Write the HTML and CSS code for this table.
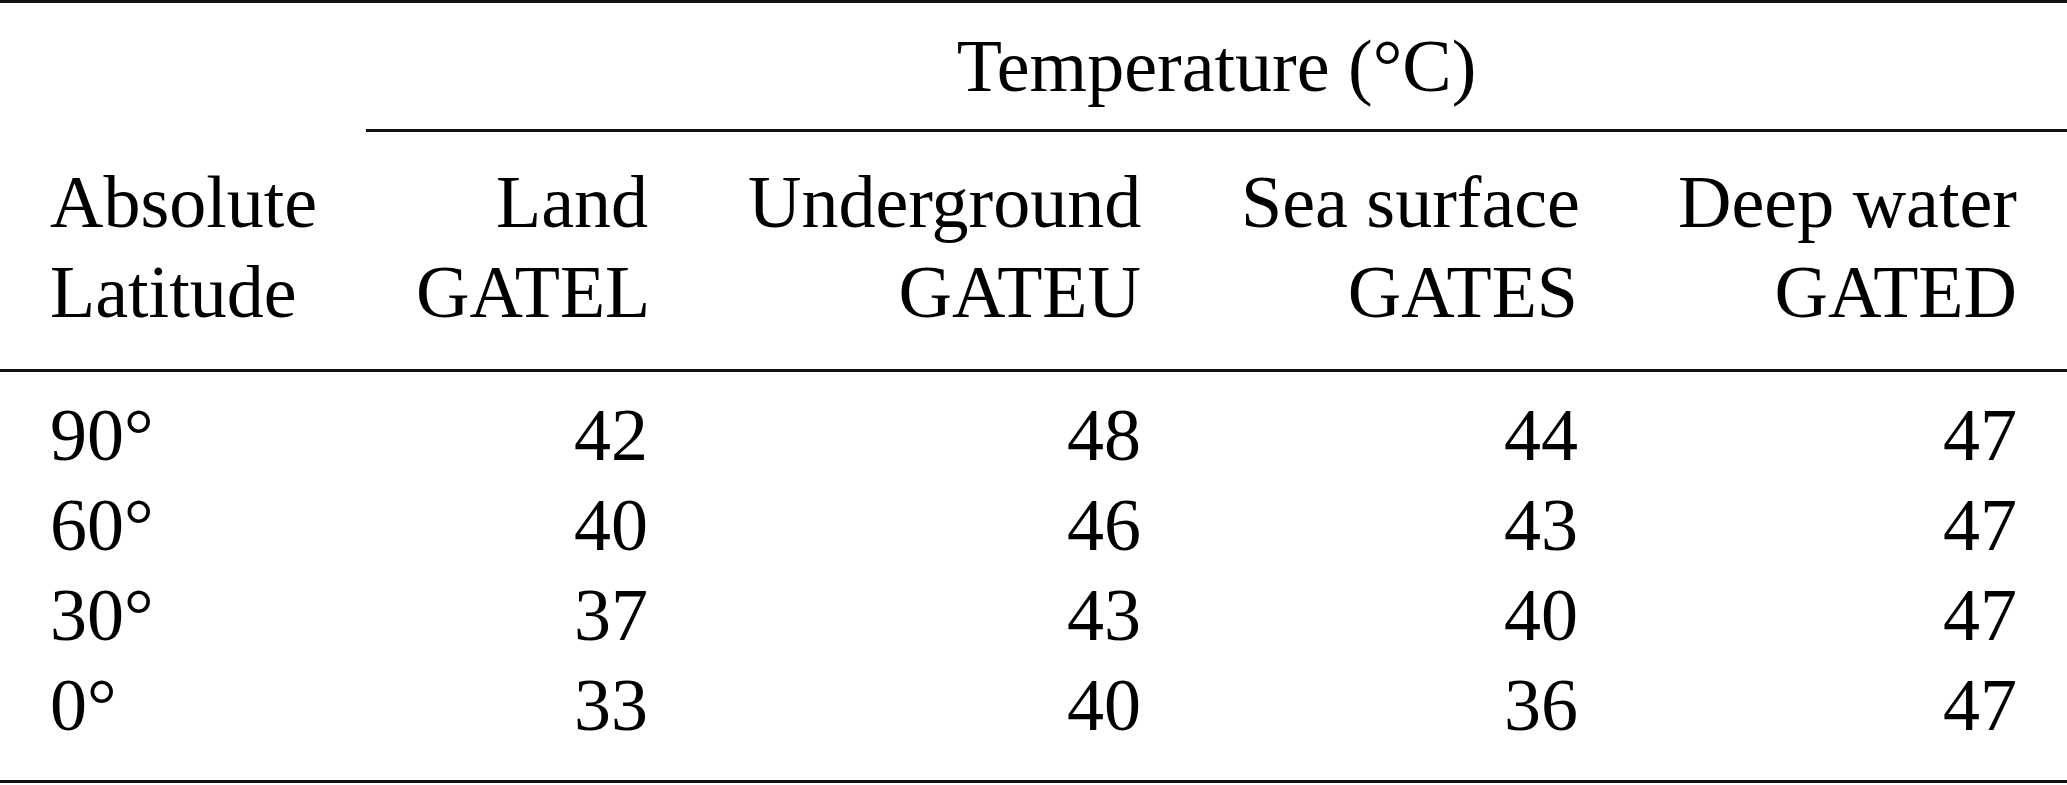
FILE: index.html
```html
<!DOCTYPE html>
<html>

<head>
  <title>Temperature table</title>
  <link rel="stylesheet" href="styles.css">
</head>

<body>
  <table class="data-table">
    <colgroup>
      <col class="col-lat">
      <col class="col-land">
      <col class="col-under">
      <col class="col-sea">
      <col class="col-deep">
    </colgroup>
    <thead>
      <tr class="group-row">
        <th class="blank"></th>
        <th class="group-title" colspan="4">Temperature (°C)</th>
      </tr>
      <tr class="head-row">
        <th class="left">Absolute<br>Latitude</th>
        <th>Land<br>GATEL</th>
        <th>Underground<br>GATEU</th>
        <th>Sea surface<br>GATES</th>
        <th>Deep water<br>GATED</th>
      </tr>
    </thead>
    <tbody>
      <tr class="first">
        <td class="left">90°</td>
        <td>42</td>
        <td>48</td>
        <td>44</td>
        <td>47</td>
      </tr>
      <tr>
        <td class="left">60°</td>
        <td>40</td>
        <td>46</td>
        <td>43</td>
        <td>47</td>
      </tr>
      <tr>
        <td class="left">30°</td>
        <td>37</td>
        <td>43</td>
        <td>40</td>
        <td>47</td>
      </tr>
      <tr class="last">
        <td class="left">0°</td>
        <td>33</td>
        <td>40</td>
        <td>36</td>
        <td>47</td>
      </tr>
    </tbody>
  </table>
</body>

</html>
```

FILE: styles.css
```css
/* 页面基础 */
body,
html {
  margin: 0;
  background-color: #fff;
}

/* 表格整体 */
.data-table {
  width: 2067px;
  table-layout: fixed;
  border-collapse: separate;
  border-spacing: 0;
  font-family: "Liberation Serif", "Times New Roman", serif;
  font-size: 74px;
  line-height: 90px;
  color: #000;
}

/* 列宽 */
.col-lat {
  width: 366px;
}

.col-land {
  width: 332px;
}

.col-under {
  width: 493px;
}

.col-sea {
  width: 437px;
}

.col-deep {
  width: 439px;
}

/* 单元格 */
.data-table th,
.data-table td {
  font-weight: normal;
  padding: 0 50px;
  text-align: right;
  vertical-align: top;
  white-space: nowrap;
}

.data-table .left {
  text-align: left;
}

/* 顶部粗线 */
.group-row th {
  border-top: 3px solid #111;
  padding-top: 18px;
  padding-bottom: 18px;
}

/* 分组标题和下面的短线 */
.group-title {
  text-align: center !important;
  border-bottom: 3px solid #111;
}

/* 列标题 */
.head-row th {
  padding-top: 25px;
  padding-bottom: 32px;
  border-bottom: 3px solid #111;
}

/* 数据行 */
.first td {
  padding-top: 18px;
}

.last td {
  padding-bottom: 30px;
  border-bottom: 3px solid #111;
}
```
